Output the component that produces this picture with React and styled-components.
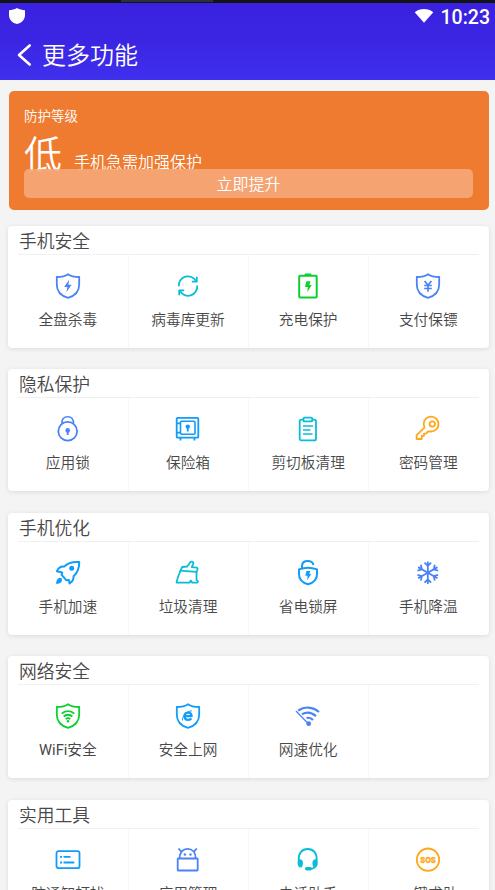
import styled, { createGlobalStyle } from "styled-components";

const GlobalStyle = createGlobalStyle`
	* {
		box-sizing: border-box;
	}

	body {
		background-color: #f4f4f4;
		font-family: Roboto, "Noto Sans CJK SC", sans-serif;
		font-weight: 350;
		margin: 0;
	}
`;

const Screen = styled.div`
	height: 890px;
	overflow: hidden;
	width: 495px;
`;

const Notch = styled.div`
	background-color: #141414;
	display: flex;
	height: 3px;
	padding-left: 121px;
`;

const NotchTab = styled.div`
	background-color: #2b2f3e;
	height: 2px;
	width: 92px;
`;

const Header = styled.header`
	background: linear-gradient(#3a21df, #3b25e3 50%, #3f30ee);
	color: #fff;
	height: 77px;
`;

const StatusBar = styled.div`
	align-items: center;
	display: flex;
	font-size: 19.5px;
	font-weight: 500;
	height: 26px;
	line-height: 26px;
	padding: 0 5px 0 8px;

	svg:first-child {
		margin-right: auto;
	}
`;

const Clock = styled.span`
	margin: 3px 0 0 7px;
`;

const TitleBar = styled.div`
	align-items: center;
	display: flex;
	height: 51px;
	padding-left: 16px;
`;

const PageTitle = styled.h1`
	font-size: 24px;
	font-weight: 350;
	line-height: 36px;
	margin: 2px 0 0 9px;
`;

const Hero = styled.section`
	background-color: #ef7b31;
	border-radius: 5px;
	color: #fff;
	height: 118.5px;
	margin: 11px 6.5px 0 8.5px;
	padding: 15px 15.5px 0;
`;

const HeroCaption = styled.div`
	font-size: 13.5px;
	line-height: 21px;
`;

const HeroStatus = styled.div`
	align-items: baseline;
	display: flex;
	height: 42px;
	line-height: 56px;
`;

const Level = styled.span`
	font-size: 38px;
`;

const Advice = styled.span`
	font-size: 16px;
	margin-left: 12px;
`;

const BoostButton = styled.button`
	background-color: rgba(244, 170, 125, 0.85);
	border: 0;
	border-radius: 5px;
	color: #fff;
	display: block;
	font-family: inherit;
	font-size: 16px;
	font-weight: inherit;
	height: 29px;
	line-height: 29px;
	padding: 1px 0 0;
	position: relative;
	width: 100%;
`;

const Sections = styled.main`
	display: flex;
	flex-direction: column;
	gap: 21.6px;
	padding: 16.2px 6px 0 8px;
`;

const Card = styled.section`
	background-color: #fff;
	border-radius: 4px;
	box-shadow: 0 1px 5px rgba(0, 0, 0, 0.1);
	height: 122px;
`;

const CardTitle = styled.h2`
	border-bottom: 1px solid #f0f0f0;
	color: #484848;
	font-size: 17.8px;
	font-weight: 350;
	height: 29px;
	line-height: 31px;
	margin: 0 10px;
	padding-left: 1px;
`;

const Grid = styled.div`
	display: grid;
	grid-template-columns: repeat(4, 120.15px);
	height: 93px;
`;

const Tile = styled.div`
	align-items: center;
	border-left: 1px solid ${({ $first }) => ($first ? "transparent" : "#f7f7f7")};
	color: #484848;
	display: flex;
	flex-direction: column;
	font-size: 14.7px;
	gap: 9px;
	line-height: 22px;
	padding: 17px 1.4px 0 0;
	white-space: nowrap;
`;

const Label = styled.span`
	font-weight: ${({ $latin }) => ($latin ? 400 : 350)};
`;

const Glyph = styled.svg`
	color: ${({ $color }) => $color};
	fill: none;
	flex: none;
	height: 28px;
	stroke: currentColor;
	stroke-linejoin: round;
	stroke-width: ${({ $weight }) => $weight || 1.8};
	width: 28px;

	.solid {
		fill: currentColor;
		stroke: none;
	}

	text {
		fill: currentColor;
		font-family: Inter, sans-serif;
		font-weight: 800;
		stroke-width: 0.3;
	}
`;

const BLUE = "#4b82f8";
const SKY = "#109cf8";
const CYAN = "#0bbcd9";
const GREEN = "#0bd02f";
const AMBER = "#fda91b";

const shield = <path d="M14 2.200C11 4.400 7 5 2.800 5v7.500C2.800 19.500 7.400 24 14 25.800c6.600-1.800 11.200-6.300 11.200-13.300V5C21 5 17 4.400 14 2.200Z" />;

const icons = {
	scan: {
		color: BLUE,
		art: <>{shield}<path className="solid" d="M15.300 7.500 10.200 15h3.200l-1 5.300 5.200-7.600h-3.300Z" /></>,
	},
	refresh: {
		color: CYAN,
		art: <>
			<path d="M4.800 14.200A9.200 9.200 0 0 1 22 9M23.200 13.500A9.200 9.200 0 0 1 6 19" />
			<path d="M22.800 4.800v4.800h-5M5.200 23.200v-4.800h5" />
		</>,
	},
	battery: {
		color: GREEN,
		weight: 2,
		art: <>
			<rect x="5.200" y="3.700" width="17.500" height="21.700" rx="1" />
			<path className="solid" d="M10.700 1.500h6.500v2.500h-6.500ZM12.400 9.300h4l-1 3.700h2.300l-4.400 7.200.5-5.100h-2.800Z" />
		</>,
	},
	pay: {
		color: BLUE,
		art: <>{shield}<path strokeWidth="1.700" d="m10.600 9 3.400 4.300L17.400 9M10.200 13.500h7.600M10.200 16.500h7.600M14 13.300v6.500" /></>,
	},
	lock: {
		color: BLUE,
		art: <>
			<circle cx="13.700" cy="16.300" r="9.400" />
			<path strokeWidth="1.600" d="M8 8.700C7.500 4 10 1.700 13.700 1.700S19.900 4 19.400 8.700" />
			<circle className="solid" cx="13.700" cy="15.400" r="2.300" />
			<path d="M13.700 16v4" />
		</>,
	},
	safe: {
		color: SKY,
		art: <>
			<rect x="2.700" y="2.900" width="21.600" height="19.800" rx="1" />
			<rect x="6.500" y="6.300" width="14.500" height="13" rx="1" strokeWidth="1.600" />
			<path d="M3 8.300h3.500M3 17.700h3.500M6.500 23v2.500M20.500 23v2.500" />
			<circle className="solid" cx="13.800" cy="11.600" r="2.200" />
			<path d="M13.800 12v4.500" />
		</>,
	},
	clipboard: {
		color: CYAN,
		art: <>
			<rect x="5.700" y="4.600" width="16.300" height="20.800" rx="1.700" />
			<rect x="9.500" y="2.600" width="8.700" height="3.800" rx="1" fill="#fff" />
			<path d="M9 11h10M9 15h7.500M9 19h9.500" strokeWidth="1.500" />
		</>,
	},
	key: {
		color: AMBER,
		art: <>
			<path d="M10.500 12.600A7.400 7.400 0 1 1 15.800 16.400l-2.100.2-1.500 2H10v2.200H7.700V24H2.600v-3.800Z" />
			<circle cx="18.300" cy="9" r="2.700" />
		</>,
	},
	rocket: {
		color: SKY,
		weight: 2,
		art: <>
			<path d="M10.200 7.600C14 3.600 19 2.500 25.200 3c.2 5.500-1.800 10.700-5.600 14.200.3 3-1.500 5.600-4 7.200l-.8-3.500-2.500.3-4.700-5.300.6-2.500-5.300-1.200C4.500 8.500 7.200 7.400 10.200 7.600Z" />
			<circle className="solid" cx="17.700" cy="9.300" r="2.500" />
			<path className="solid" d="M5.500 18.700c-2.200.4-3.300 3-3.500 6.100 3.300 0 5.700-1.200 6-3.400l-.5-2.400Z" />
		</>,
	},
	broom: {
		color: CYAN,
		art: <>
			<path d="M6.500 11.700 8.200 8l5-.5 3.300-4.500c1.300-1 3.300.1 2.900 1.700l-1.600 3.500 4.800.4c1 .3 1.200 1.300.8 2.200l-1 2.100Z" />
			<path d="M6.500 11.700C4.800 16 3 19.700 2.600 23.700h12.900l1.300-2.200 1.400 2.200h4.300c2 0 1.700-1.900 0-2.700V12.500" />
		</>,
	},
	powerLock: {
		color: SKY,
		weight: 2,
		art: <>
			<path d="M14 8.800c-2.800 0-5.500.4-9 1.600v5c0 4.500 3.500 8.200 9 9.800 5.500-1.600 9-5.300 9-9.800v-5c-3.500-1.200-6.200-1.600-9-1.600Z" />
			<path d="M8 9V6.500C8.300 3.500 10.300 2 13.700 2c3 0 5.200 1.300 5.800 4" />
			<path className="solid" d="M12.500 12h3.800l-1 3.100h1.900l-4 6.100.4-4.500h-2.300Z" />
		</>,
	},
	snow: {
		color: BLUE,
		art: <g transform="translate(13.800 13.700)">
			{[0, 60, 120, 180, 240, 300].map((angle) => (
				<path key={angle} transform={`rotate(${angle})`} d="M0 0v-11.200M-3.300-10 0-6.800 3.300-10" />
			))}
			<circle className="solid" r="1.800" />
		</g>,
	},
	wifiShield: {
		color: GREEN,
		art: <>
			{shield}
			<path d="M7.700 11.700a9 9 0 0 1 12.600 0M9.700 14.500a6.100 6.100 0 0 1 8.600 0M11.700 17.200a3.300 3.300 0 0 1 4.600 0" />
			<circle className="solid" cx="14" cy="19.300" r="1.200" />
		</>,
	},
	webShield: {
		color: SKY,
		art: <>
			{shield}
			<path strokeWidth="2.300" d="M10.400 14.200h7.200c-.1-2.300-1.300-3.600-3.400-3.600-2.200 0-3.700 1.500-3.700 3.700s1.400 3.600 3.700 3.600c1.400 0 2.500-.6 3.100-1.600" />
			<path strokeWidth="1" d="M8.500 18.500c-.8-3.500 3.500-9 9.300-9.700" />
		</>,
	},
	network: {
		color: BLUE,
		art: <>
			<path strokeWidth="2.200" d="M4.200 8.500C10.500 4.200 18.500 4.400 25 10M8 12.300c4.800-2.700 9.500-2 14 1.800M12.500 16c2.800-.7 4.700 0 6.500 2" />
			<path strokeWidth="1.300" d="m2 9 12.500 13" />
			<circle className="solid" cx="14.700" cy="21.700" r="2.400" />
		</>,
	},
	notice: {
		color: SKY,
		art: <>
			<rect x="2.500" y="5.200" width="23" height="17" rx="2" />
			<path d="M6 10.800h2M9.500 10.800h7M6 16.500h2M9.500 16.500h10.800" />
		</>,
	},
	apps: {
		color: BLUE,
		art: <>
			<rect x="3.700" y="12.500" width="20" height="12" rx=".5" />
			<path d="M5.500 12.500C5.500 6.200 9 2.800 13.600 2.800s8.100 3.400 8.100 9.700M7.300 5.700 4.500 2.500M20 5.700l2.800-3.200" />
			<circle className="solid" cx="10.900" cy="8.500" r="1.200" />
			<circle className="solid" cx="16.500" cy="8.500" r="1.200" />
		</>,
	},
	headset: {
		color: CYAN,
		art: <>
			<path strokeWidth="1.900" d="M4.700 14C4.400 7 8 3 13.700 3s9.300 4 9 11M22.500 18c-.7 2.500-2.200 4.300-5 4.800" />
			<path className="solid" d="M4 13.700c2.800-1.200 5 .4 5 3.300s-1 4.700-2.700 4.500C4 21 3 17.500 4 13.700ZM23.400 13.700c-2.800-1.200-5 .4-5 3.300s1 4.700 2.700 4.500c2.300-.5 3.300-4 2.300-7.800Z" />
			<rect className="solid" x="11" y="21" width="7" height="3.400" rx="1.600" />
		</>,
	},
	sos: {
		color: AMBER,
		art: <>
			<circle cx="14" cy="13.700" r="11.200" />
			<text x="14" y="16.700" fontSize="8.200" textAnchor="middle" textLength="15.500" lengthAdjust="spacingAndGlyphs">SOS</text>
		</>,
	},
};

const sections = [
	["手机安全", [["scan", "全盘杀毒"], ["refresh", "病毒库更新"], ["battery", "充电保护"], ["pay", "支付保镖"]]],
	["隐私保护", [["lock", "应用锁"], ["safe", "保险箱"], ["clipboard", "剪切板清理"], ["key", "密码管理"]]],
	["手机优化", [["rocket", "手机加速"], ["broom", "垃圾清理"], ["powerLock", "省电锁屏"], ["snow", "手机降温"]]],
	["网络安全", [["wifiShield", "WiFi安全"], ["webShield", "安全上网"], ["network", "网速优化"], null]],
	["实用工具", [["notice", "防通知打扰"], ["apps", "应用管理"], ["headset", "电话助手"], ["sos", "一键求助"]]],
];

const Feature = ({ item, first }) => {
	if (!item) return <Tile />;

	const [name, label] = item;
	const { color, weight, art } = icons[name];

	return (
		<Tile $first={first}>
			<Glyph viewBox="0 0 28 28" $color={color} $weight={weight}>{art}</Glyph>
			<Label $latin={/[a-z]/i.test(label)}>{label}</Label>
		</Tile>
	);
};

const App = () => (
	<>
		<GlobalStyle />
		<Screen>
			<Notch>
				<NotchTab />
			</Notch>
			<Header>
				<StatusBar>
					<svg width="18" height="18" viewBox="0 0 18 18" fill="#fff">
						<path d="M9 1c2.500 1.400 5 2 8 2.200v4.800c0 4.500-3.500 8.300-8 9-4.500-.7-8-4.500-8-9V3.200C4 3 6.500 2.400 9 1Z" />
					</svg>
					<svg width="20" height="16" viewBox="0 0 20 16" fill="#fff">
						<path d="M.7 4.200c5.400-4.300 13.200-4.300 18.600 0L10 14.800Z" />
					</svg>
					<Clock>10:23</Clock>
				</StatusBar>
				<TitleBar>
					<svg width="17" height="24" viewBox="0 0 17 24" fill="none" stroke="#fff" strokeWidth="2.600" strokeLinecap="round" strokeLinejoin="round">
						<path d="M13.700 2.500 3 12l10.700 9.500" />
					</svg>
					<PageTitle>更多功能</PageTitle>
				</TitleBar>
			</Header>
			<Hero>
				<HeroCaption>防护等级</HeroCaption>
				<HeroStatus>
					<Level>低</Level>
					<Advice>手机急需加强保护</Advice>
				</HeroStatus>
				<BoostButton>立即提升</BoostButton>
			</Hero>
			<Sections>
				{sections.map(([title, items]) => (
					<Card key={title}>
						<CardTitle>{title}</CardTitle>
						<Grid>
							{items.map((item, index) => (
								<Feature key={index} item={item} first={index === 0} />
							))}
						</Grid>
					</Card>
				))}
			</Sections>
		</Screen>
	</>
);

export default App;
